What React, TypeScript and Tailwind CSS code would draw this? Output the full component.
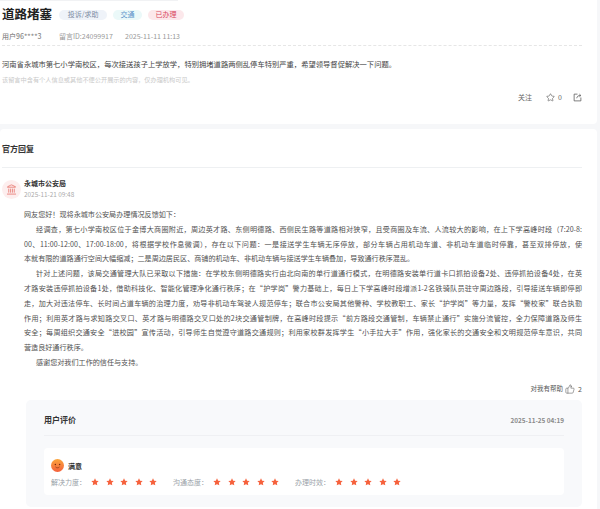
import { Landmark, Star, ThumbsUp } from "lucide-react";

const font = { fontFamily: '"Noto Sans CJK SC", "Liberation Sans", sans-serif' };

const lines: { t: string; indent?: boolean; last?: boolean }[] = [
  { t: "网友您好！现将永城市公安局办理情况反馈如下：", last: true },
  { t: "经调查，第七小学南校区位于金博大商圈附近，周边英才路、东侧明德路、西侧民生路等道路相对狭窄，且受商圈及车流、人流较大的影响，在上下学高峰时段（7:20-8:", indent: true },
  { t: "00、11:00-12:00、17:00-18:00，将根据学校作息微调），存在以下问题：一是接送学生车辆无序停放，部分车辆占用机动车道、非机动车道临时停靠，甚至双排停放，使" },
  { t: "本就有限的道路通行空间大幅缩减；二是周边居民区、商铺的机动车、非机动车辆与接送学生车辆叠加，导致通行秩序混乱。", last: true },
  { t: "针对上述问题，该局交通管理大队已采取以下措施：在学校东侧明德路实行由北向南的单行道通行模式，在明德路安装单行道卡口抓拍设备2处、违停抓拍设备4处，在英", indent: true },
  { t: "才路安装违停抓拍设备1处，借助科技化、智能化管理净化通行秩序；在“护学岗”警力基础上，每日上下学高峰时段增派1-2名铁骑队员驻守周边路段，引导接送车辆即停即" },
  { t: "走，加大对违法停车、长时间占道车辆的治理力度，劝导非机动车驾驶人规范停车；联合市公安局其他警种、学校教职工、家长“护学岗”等力量，发挥“警校家”联合执勤" },
  { t: "作用；利用英才路与求知路交叉口、英才路与明德路交叉口处的2块交通管制牌，在高峰时段提示“前方路段交通管制，车辆禁止通行”实施分流管控，全力保障道路及师生" },
  { t: "安全；每周组织交通安全“进校园”宣传活动，引导师生自觉遵守道路交通规则；利用家校群发挥学生“小手拉大手”作用，强化家长的交通安全和文明规范停车意识，共同" },
  { t: "营造良好通行秩序。", last: true },
  { t: "感谢您对我们工作的信任与支持。", indent: true, last: true },
];

function Stars({ label }: { label: string }) {
  return (
    <div className="flex items-center">
      <span className="w-[40px] text-[7px] text-[#9a9fa8] whitespace-nowrap">{label}</span>
      <div className="flex gap-[6.6px]">
        {[0, 1, 2, 3, 4].map((i) => (
          <svg key={i} viewBox="0 0 24 24" className="h-[8px] w-[8px] fill-[#f6613c]">
            <path d="M12 1l3.4 7.1 7.6 1-5.6 5.3 1.5 7.7L12 18.4l-6.9 3.7 1.5-7.7L1 9.1l7.6-1z" />
          </svg>
        ))}
      </div>
    </div>
  );
}

export default function App() {
  return (
    <div className="h-[509px] w-[600px] overflow-hidden bg-[#f6f7f9] text-[#333]" style={font}>
      <div className="w-[597px] overflow-hidden">
        <section className="relative h-[124px] rounded-br-[4px] bg-white pl-[2px] pr-[15px]">
          <div className="absolute left-0 top-0 h-px w-[178px] bg-[#f1f2f4]" />
          <div className="flex h-[28px] items-center pt-[1px]">
            <h1 className="text-[12.5px] font-bold leading-none text-[#222]">道路堵塞</h1>
            <div className="ml-[7px] flex gap-[6px] text-[7px] leading-none">
              <span className="flex h-[10px] w-[48px] items-center justify-center rounded-full bg-[#eff3f9] text-[#7c8ba3]">投诉/求助</span>
              <span className="flex h-[10px] w-[29px] items-center justify-center rounded-full bg-[#ebf9f9] text-[#5b93c9]">交通</span>
              <span className="flex h-[10px] w-[36px] items-center justify-center rounded-full bg-[#fce8eb] text-[#d9485f]">已办理</span>
            </div>
          </div>
          <div className="flex h-[18px] items-center border-b border-dashed border-[#e6e6e6] pb-[1px] text-[7px] text-[#8a8a8a]">
            <span className="w-[57px] font-medium">用户96****3</span>
            <span className="w-[66px] text-[#999]">留言ID:24099917</span>
            <span className="text-[#999]">2025-11-11 11:13</span>
          </div>
          <p className="mt-[12px] text-[7.3px] leading-[12px] text-[#444]">河南省永城市第七小学南校区，每次接送孩子上学放学，特别拥堵道路两侧乱停车特别严重，希望领导督促解决一下问题。</p>
          <p className="mt-[4px] text-[6.2px] leading-[12px] text-[#c9c9c9]">该留言中含有个人信息或其他不便公开展示的内容，仅办理机构可见。</p>
          <div className="mt-[6px] flex items-center justify-end text-[7px] text-[#666]">
            <span>关注</span>
            <Star className="ml-[14px] h-[9px] w-[9px]" strokeWidth={1.8} />
            <span className="ml-[3px]">0</span>
            <svg viewBox="0 0 12 12" fill="none" stroke="#555" strokeWidth="1" className="ml-[11px] h-[9px] w-[9px]">
              <path d="M6 1.5H1.5v9h9V6" />
              <path d="M5 7c.3-2.5 2-3.7 5-3.7M8.5 1.5l2 1.8-2 1.8" />
            </svg>
          </div>
        </section>

        <section className="mt-[5px] h-[380px] rounded-t-[4px] bg-white pl-[2px] pr-[15px]">
          <div className="flex h-[39px] items-center border-b border-[#eef0f2] pt-[2px]">
            <h2 className="text-[8px] font-bold text-[#333]">官方回复</h2>
          </div>
          <div className="mt-[10px] flex h-[22px] items-center">
            <span className="flex h-[19px] w-[19px] items-center justify-center rounded-full bg-[#fdeeee]">
              <Landmark className="h-[11px] w-[11px] text-[#e4675f]" strokeWidth={1.6} />
            </span>
            <div className="ml-[3px] leading-[11px]">
              <div className="text-[7px] font-bold text-[#333]">永城市公安局</div>
              <div className="text-[6.4px] text-[#aaa]">2025-11-21 09:48</div>
            </div>
          </div>
          <div className="mt-[7px] pl-[22px] text-[7.1px] leading-[14.8px] text-[#505050]">
            {lines.map((l) => (
              <div
                key={l.t}
                className={`whitespace-nowrap ${l.indent ? "pl-[12px]" : ""} ${l.last ? "" : "[text-align:justify] [text-align-last:justify] whitespace-normal"}`}
              >
                {l.t}
              </div>
            ))}
          </div>
          <div className="mt-[14px] flex items-center justify-end text-[6.5px] text-[#555]">
            <span>对我有帮助</span>
            <ThumbsUp className="ml-[2px] h-[10px] w-[10px]" strokeWidth={1.3} />
            <span className="ml-[3px] text-[7px]">2</span>
          </div>

          <div className="ml-[24px] mt-[6px] h-[107px] rounded-[5px] bg-[#f8f9fb] px-[18px]">
            <div className="flex h-[36px] items-center justify-between border-b border-[#eff0f3] pt-[4px]">
              <h3 className="text-[8px] font-bold text-[#333]">用户评价</h3>
              <span className="mt-[3px] text-[6.4px] font-bold text-[#8a8a8a]">2025-11-25 04:19</span>
            </div>
            <div className="mt-[12px] h-[47px] rounded-[4px] bg-white px-[7px] pt-[11px]">
              <div className="flex items-center">
                <svg viewBox="0 0 14 14" className="h-[13px] w-[13px]">
                  <defs>
                    <linearGradient id="face" x1="0" y1="0" x2="0" y2="1">
                      <stop offset="0" stopColor="#fba53c" />
                      <stop offset="1" stopColor="#f4613c" />
                    </linearGradient>
                  </defs>
                  <circle cx="7" cy="7" r="7" fill="url(#face)" />
                  <circle cx="4.7" cy="6" r=".8" fill="#7a2d10" />
                  <circle cx="9.3" cy="6" r=".8" fill="#7a2d10" />
                  <path d="M4.8 8.5c1 1.3 3.4 1.3 4.4 0" stroke="#7a2d10" strokeWidth=".7" fill="none" />
                </svg>
                <span className="ml-[4px] text-[7px] font-bold text-[#333]">满意</span>
              </div>
              <div className="mt-[4px] flex h-[11px] items-center gap-[15.6px]">
                <Stars label="解决力度：" />
                <Stars label="沟通态度：" />
                <Stars label="办理时效：" />
              </div>
            </div>
          </div>
        </section>
      </div>
    </div>
  );
}
